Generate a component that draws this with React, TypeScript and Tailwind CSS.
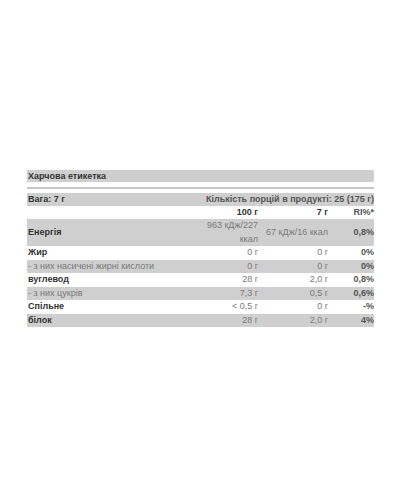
const rows = [
  { label: "Жир", sub: false, a: "0 г", b: "0 г", ri: "0%" },
  { label: "- з них насичені жирні кислоти", sub: true, a: "0 г", b: "0 г", ri: "0%" },
  { label: "вуглевод", sub: false, a: "28 г", b: "2,0 г", ri: "0,8%" },
  { label: "- з них цукрів", sub: true, a: "7,3 г", b: "0,5 г", ri: "0,6%" },
  { label: "Спільне", sub: false, a: "< 0,5 г", b: "0 г", ri: "-%" },
  { label: "білок", sub: false, a: "28 г", b: "2,0 г", ri: "4%" },
];

export default function App() {
  return (
    <div className="w-[400px] h-[500px] bg-white pt-[170px] pl-[27px] font-['Liberation_Sans',Arial,sans-serif] text-[9px] text-[#333]">
      <div className="w-[347px]">
        <div className="bg-[#cfcfcf] h-[12px] leading-[12px] font-bold pl-[1px]">Харчова етикетка</div>
        <div className="mt-[5px] h-[2px] bg-[#c8c8c8]" />
        <table className="mt-[4px] w-full border-collapse table-fixed">
          <colgroup>
            <col />
            <col className="w-[62px]" />
            <col className="w-[70px]" />
            <col className="w-[43px]" />
          </colgroup>
          <tbody>
            <tr className="bg-[#cfcfcf] h-[13px]">
              <td className="font-bold pl-[1px] leading-[13px]">Вага: 7 г</td>
              <td colSpan={3} className="font-bold text-right text-[#555] leading-[13px]">
                Кількість порцій в продукті: 25 (175 г)
              </td>
            </tr>
            <tr className="h-[13px]">
              <td />
              <td className="font-bold text-right pr-[3px] leading-[13px]">100 г</td>
              <td className="font-bold text-right pr-[3px] leading-[13px]">7 г</td>
              <td className="font-bold text-right text-[#555] leading-[13px]">RI%*</td>
            </tr>
            <tr className="bg-[#cfcfcf] h-[27px]">
              <td className="font-bold pl-[1px] leading-[13.5px]">Енергія</td>
              <td className="text-right text-[#7a7a7a] pr-[3px] leading-[13.5px]">963 кДж/227 ккал</td>
              <td className="text-right text-[#7a7a7a] pr-[3px] leading-[13.5px] whitespace-nowrap">67 кДж/16 ккал</td>
              <td className="text-right font-bold text-[#555] leading-[13.5px]">0,8%</td>
            </tr>
            {rows.map((r, i) => (
              <tr key={i} className={i % 2 === 1 ? "bg-[#cfcfcf] h-[13.5px]" : "h-[13.5px]"}>
                <td className={(r.sub ? "text-[#7a7a7a] font-normal" : "font-bold") + " pl-[1px] leading-[13.5px] whitespace-nowrap"}>
                  {r.label}
                </td>
                <td className="text-right text-[#7a7a7a] pr-[3px] leading-[13.5px]">{r.a}</td>
                <td className="text-right text-[#7a7a7a] pr-[3px] leading-[13.5px]">{r.b}</td>
                <td className="text-right font-bold text-[#555] leading-[13.5px]">{r.ri}</td>
              </tr>
            ))}
          </tbody>
        </table>
      </div>
    </div>
  );
}
